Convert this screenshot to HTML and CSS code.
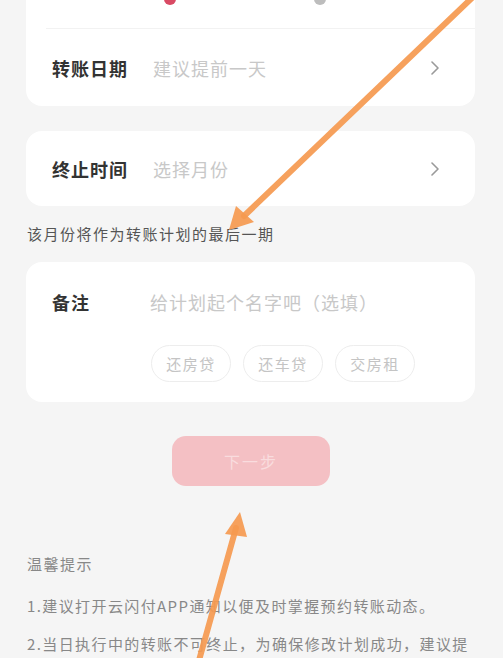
FILE: index.html
```html
<!DOCTYPE html>
<html lang="zh-CN">
<head>
<meta charset="utf-8">
<title>转账计划</title>
<link rel="stylesheet" href="styles.css">
</head>
<body>
<div class="page">
  <div class="card card-first">
    <div class="row row-top">
      <span class="dot dot-red"></span>
      <span class="dot dot-grey"></span>
    </div>
    <div class="row">
      <span class="label">转账日期</span>
      <span class="value">建议提前一天</span>
      <svg class="chev" viewBox="0 0 8 14" width="8" height="14"><path d="M1 1 L7 7 L1 13" fill="none" stroke="#9a9a9a" stroke-width="1.6" stroke-linecap="round" stroke-linejoin="round"/></svg>
    </div>
  </div>

  <div class="card">
    <div class="row">
      <span class="label">终止时间</span>
      <span class="value">选择月份</span>
      <svg class="chev" viewBox="0 0 8 14" width="8" height="14"><path d="M1 1 L7 7 L1 13" fill="none" stroke="#9a9a9a" stroke-width="1.6" stroke-linecap="round" stroke-linejoin="round"/></svg>
    </div>
  </div>

  <p class="note">该月份将作为转账计划的最后一期</p>

  <div class="card card-remark">
    <div class="remark-row">
      <span class="label label-short">备注</span>
      <span class="value">给计划起个名字吧（选填）</span>
    </div>
    <div class="chips">
      <span class="chip">还房贷</span>
      <span class="chip">还车贷</span>
      <span class="chip">交房租</span>
    </div>
  </div>

  <div class="btn-wrap">
    <button class="btn" type="button">下一步</button>
  </div>

  <div class="tips">
    <h3 class="tips-title">温馨提示</h3>
    <p class="tip">1.建议打开云闪付APP通知以便及时掌握预约转账动态。</p>
    <p class="tip">2.当日执行中的转账不可终止，为确保修改计划成功，建议提前一天修改。</p>
  </div>
</div>

<svg class="arrows" viewBox="0 0 503 658" width="503" height="658">
  <g stroke="#f5994f" stroke-width="6" stroke-linecap="round" fill="none" opacity="0.92">
    <line x1="474" y1="-4" x2="244" y2="216"/>
    <line x1="198" y1="664" x2="236" y2="528"/>
  </g>
  <g fill="#f5994f" opacity="0.92">
    <polygon points="229,230 236,206 254,222"/>
    <polygon points="240,512 225,534 247,537"/>
  </g>
</svg>
</body>
</html>
```

FILE: styles.css
```css
html, body {
  margin: 0;
  padding: 0;
}

body {
  background: #f5f5f5;
  font-family: "Noto Sans CJK SC", "Noto Sans", sans-serif;
  width: 503px;
  height: 658px;
  overflow: hidden;
  position: relative;
}

.page {
  padding: 0 28px 0 26px;
}

.card {
  background: #ffffff;
  border-radius: 16px;
  margin-bottom: 25px;
}

.card-first {
  margin-top: -28px;
}

.row {
  display: flex;
  align-items: center;
  height: 75px;
  padding: 0 36px 0 26px;
}

.card-first .row:last-child {
  height: 77px;
}

.row-top {
  height: 56px;
  border-bottom: 1px solid #f2f2f2;
  margin-left: 20px;
  padding-left: 6px;
  position: relative;
}

.dot {
  width: 12px;
  height: 12px;
  border-radius: 50%;
  position: absolute;
  bottom: 23px;
}

.dot-red {
  background: #d94a64;
  left: 118px;
}

.dot-grey {
  background: #bdbdbd;
  left: 268px;
}

.label {
  width: 101px;
  flex: none;
  font-size: 18px;
  font-weight: 700;
  letter-spacing: 1px;
  color: #333333;
  line-height: 24px;
}

.value {
  flex: 1;
  font-size: 18px;
  letter-spacing: 1px;
  color: #c8c8c8;
  line-height: 24px;
}

.chev {
  flex: none;
}

.note {
  margin: -8px 0 0 1px;
  font-size: 15px;
  letter-spacing: 1.5px;
  line-height: 22px;
  color: #555555;
  padding-bottom: 17px;
}

.card-remark {
  padding: 28px 24px 20px 26px;
}

.remark-row {
  display: flex;
  align-items: center;
}

.label-short {
  width: 98px;
}

.chips {
  display: flex;
  gap: 12px;
  margin: 31px 0 0 99px;
}

.chip {
  width: 78px;
  height: 35px;
  border: 1px solid #ededed;
  border-radius: 19px;
  display: flex;
  align-items: center;
  justify-content: center;
  font-size: 15px;
  letter-spacing: 1.5px;
  color: #c4c4c4;
}

.btn-wrap {
  display: flex;
  justify-content: center;
  padding: 9px 0 0 1px;
}

.btn {
  width: 158px;
  height: 50px;
  border: none;
  border-radius: 14px;
  background: #f4c0c4;
  color: #f9dcde;
  font-family: inherit;
  font-size: 16px;
  letter-spacing: 2px;
}

.tips {
  padding: 66px 0 0 1px;
}

.tips-title {
  margin: 0 0 18px 0;
  font-size: 15px;
  font-weight: 400;
  line-height: 24px;
  letter-spacing: 1.5px;
  color: #888888;
}

.tip {
  margin: 0 0 14px 0;
  font-size: 15px;
  line-height: 24px;
  letter-spacing: 1.4px;
  color: #888888;
}

.arrows {
  position: absolute;
  left: 0;
  top: 0;
  pointer-events: none;
}
```
